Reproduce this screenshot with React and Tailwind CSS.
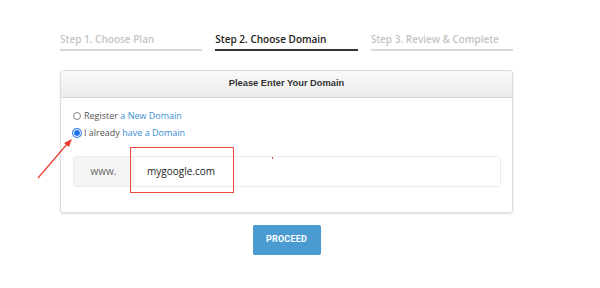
import React from 'react';

const STEPS = [
  { label: 'Step 1. Choose Plan', active: false },
  { label: 'Step 2. Choose Domain', active: true },
  { label: 'Step 3. Review & Complete', active: false },
];

function StepBar() {
  return (
    <div className="flex gap-[13px] pt-[33px]">
      {STEPS.map((s) => (
        <div
          key={s.label}
          className={`w-[143px] h-[18px] text-[10px] font-semibold leading-[13px] ${
            s.active ? 'text-[#222] border-b-2 border-[#333]' : 'text-[#c4c4c4] border-b-2 border-[#d9d9d9]'
          }`}
        >
          {s.label}
        </div>
      ))}
    </div>
  );
}

function Radio({ checked, children }) {
  return (
    <label className="flex items-center h-[17px] text-[9px] text-[#555]">
      <span
        className={`w-[8px] h-[8px] rounded-full mr-[3px] ${
          checked ? 'bg-[#1a73e8] ring-1 ring-[#3b82f6] border-[1.5px] border-white' : 'border border-[#888] bg-white'
        }`}
      />
      {children}
    </label>
  );
}

export default function App() {
  return (
    <div className="w-[600px] h-[288px] bg-white font-['Open_Sans',sans-serif] relative overflow-hidden">
      <div className="ml-[60px] w-[453px]">
        <StepBar />

        <div className="mt-[19px] border border-[#dcdcdc] rounded-[3px] shadow-[0_1px_2px_rgba(0,0,0,0.12)] h-[143px]">
          <div className="h-[27px] flex items-center justify-center border-b border-[#d6d6d6] bg-gradient-to-b from-[#f9f9f9] to-[#ececec] font-['Liberation_Sans',sans-serif] text-[9.3px] font-bold text-[#333]">
            Please Enter Your Domain
          </div>

          <div className="pl-[12px] pr-[11px] pt-[9px]">
            <Radio>
              Register&nbsp;<span className="text-[#3d8ed6]">a New Domain</span>
            </Radio>
            <Radio checked>
              I already&nbsp;<span className="text-[#3d8ed6]">have a Domain</span>
            </Radio>

            <div className="mt-[15px] flex h-[31px] border border-[#ececec] rounded-[3px]">
              <div className="w-[59px] bg-[#f5f5f5] flex items-center justify-center text-[10px] text-[#666]">
                www.
              </div>
              <div className="flex-1 bg-white flex items-center pl-[13px] text-[10px] text-[#222] border-l border-[#ececec]">
                mygoogle.com
              </div>
            </div>
          </div>
        </div>

        <div className="flex justify-center mt-[12px]">
          <button className="w-[68px] h-[30px] bg-[#4b9bd3] rounded-[2px] text-white text-[9px] font-bold font-['Roboto',sans-serif] tracking-[0.2px]">
            PROCEED
          </button>
        </div>
      </div>

      {/* red highlight box */}
      <div className="absolute left-[130px] top-[147px] w-[104px] h-[46px] border-[1.5px] border-[#f0473e]" />
      <div className="absolute left-[272px] top-[157px] w-[1px] h-[2px] bg-[#f0473e]" />

      {/* arrow */}
      <svg className="absolute left-0 top-0" width="600" height="288">
        <line x1="38" y1="178" x2="68" y2="143" stroke="#ee3a2e" strokeWidth="1.2" />
        <polygon points="72,139 64,143 69,147" fill="#ee3a2e" />
      </svg>
    </div>
  );
}
